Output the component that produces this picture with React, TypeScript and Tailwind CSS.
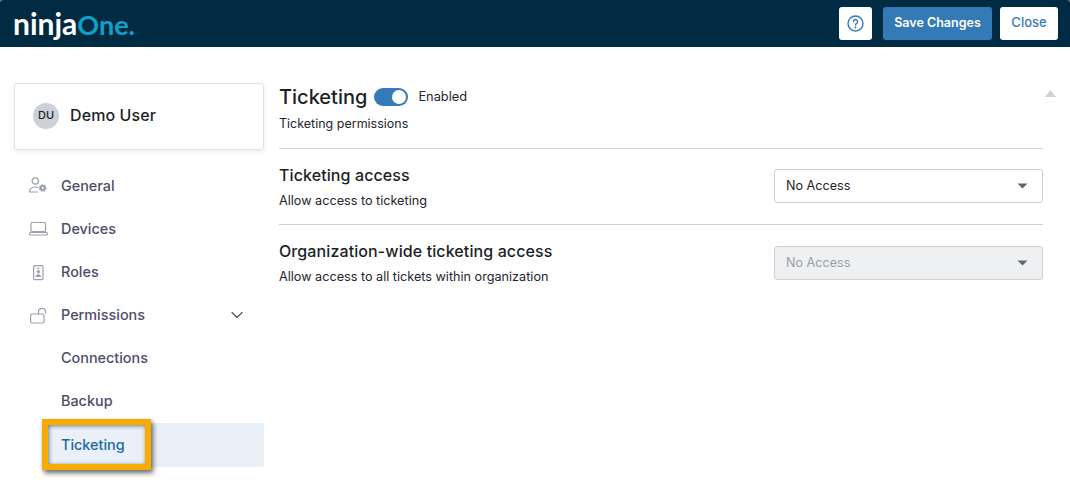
import { ChevronDown } from 'lucide-react';

function Caret() {
  return (
    <svg width="11" height="6" viewBox="0 0 11 6" className="text-[#5f6670]">
      <path d="M0.5 0.5h10L5.5 5.5z" fill="currentColor" />
    </svg>
  );
}

function Select({ disabled }: { disabled?: boolean }) {
  return (
    <div
      className={`w-[269px] h-[34px] shrink-0 flex items-center justify-between pl-[11px] pr-[14px] border border-[#ccd0d7] rounded-[3px] text-[12.6px] ${
        disabled ? 'bg-[#eff0f2] text-[#9a9fa8]' : 'bg-white text-[#1c1f26]'
      }`}
    >
      <span>No Access</span>
      <Caret />
    </div>
  );
}

function SettingRow({ title, text, disabled }: { title: string; text: string; disabled?: boolean }) {
  return (
    <div className="flex justify-between h-[76px] pt-[15px] border-t border-[#ccd0d7]">
      <div>
        <div className="text-[16px] leading-[22px] font-medium text-[#1c1f26] tracking-[0.1px]">{title}</div>
        <div className="text-[12.65px] leading-[18px] mt-[6px] text-[#23262d]">{text}</div>
      </div>
      <div className={disabled ? 'pt-[6px]' : 'pt-[5px]'}>
        <Select disabled={disabled} />
      </div>
    </div>
  );
}

function GeneralIcon() {
  return (
    <svg width="22" height="20" viewBox="0 0 22 20" fill="none" stroke="#9b9fb0" strokeWidth="1.2">
      <circle cx="7.3" cy="5" r="3.2" />
      <path d="M1.5 16h8M1.5 16c-.2-3 2.5-5 5.8-5 1 0 2 .2 2.8.5" strokeLinecap="round" />
      <circle cx="14.7" cy="12" r="3" fill="#9b9fb0" strokeWidth="1.6" strokeDasharray="1.5 1" />
      <circle cx="14.7" cy="12" r="1" fill="#fff" stroke="none" />
    </svg>
  );
}

function DevicesIcon() {
  return (
    <svg width="22" height="20" viewBox="0 0 22 20" fill="none" stroke="#9b9fb0" strokeWidth="1.2">
      <rect x="3" y="3.5" width="14.5" height="9" rx="1" />
      <rect x="1.5" y="13.5" width="18" height="2.5" rx="1" />
    </svg>
  );
}

function RolesIcon() {
  return (
    <svg width="22" height="20" viewBox="0 0 22 20" fill="none" stroke="#9b9fb0" strokeWidth="1.2">
      <rect x="5.6" y="3.6" width="9.4" height="14" rx="1.2" />
      <path d="M9.2 6.3h2.2" />
      <circle cx="10.3" cy="9.8" r="1.7" fill="#9b9fb0" stroke="none" />
      <path d="M7.6 15c0-1.8 1.2-2.8 2.7-2.8S13 13.200 13 15z" fill="#9b9fb0" stroke="none" />
    </svg>
  );
}

function LockIcon() {
  return (
    <svg width="24" height="20" viewBox="0 0 24 20" fill="none" stroke="#9b9fb0" strokeWidth="1.2">
      <rect x="2.600" y="9" width="13.400" height="9" rx="1.500" />
      <path d="M10.500 9V6.800a3.500 3.500 0 0 1 7 0V8" strokeLinecap="round" />
    </svg>
  );
}

const navItems = [
  { label: 'General', icon: <GeneralIcon /> },
  { label: 'Devices', icon: <DevicesIcon /> },
  { label: 'Roles', icon: <RolesIcon /> },
  { label: 'Permissions', icon: <LockIcon /> },
  { label: 'Connections' },
  { label: 'Backup' },
];

export default function App() {
  return (
    <div className="w-[1070px] h-[502px] bg-[#777777] overflow-hidden font-['Inter',sans-serif]">
      <header className="h-[47px] bg-[#012a43] rounded-t-[4px] flex items-center justify-between pl-[13px] pr-3">
        <div className="font-['Lato',sans-serif] font-bold leading-none pb-[1px]">
          <span className="text-white text-[30px]">ninja</span>
          <span className="text-[#12a0c9] text-[27px]">One.</span>
        </div>
        <div className="flex items-center">
          <button className="w-[33px] h-[33px] bg-white rounded-[3px] flex items-center justify-center">
            <svg width="17" height="17" viewBox="0 0 17 17" fill="none" stroke="#337ab7" strokeWidth="1.4">
              <circle cx="8.5" cy="8.5" r="7.5" />
              <path d="M6.400 6.600a2.100 2.100 0 1 1 3.200 1.800c-.7.4-1.100.8-1.100 1.600" strokeLinecap="round" />
              <path d="M8.500 12v.9" strokeLinecap="round" />
            </svg>
          </button>
          <button className="ml-[11px] w-[109px] h-[33px] bg-[#337ab7] text-white rounded-[3px] text-[12.5px] font-semibold">
            Save Changes
          </button>
          <button className="ml-2 w-[58px] h-[33px] pb-[2px] bg-white text-[#337ab7] rounded-[3px] text-[13px] font-medium">
            Close
          </button>
        </div>
      </header>

      <div className="flex h-[455px] bg-white pt-9 pl-[14px]">
        <aside className="w-[250px] shrink-0">
          <div className="h-[67px] border border-[#e0e2e6] rounded-[3px] shadow-[0_2px_5px_rgba(0,0,0,0.08)] flex items-center pl-[18px] gap-[11px] pb-[2px]">
            <div className="w-[26px] h-[26px] rounded-full bg-[#ccd0d7] flex items-center justify-center text-[11px] font-medium text-[#1c1f26]">
              DU
            </div>
            <span className="mb-[2px] text-[16px] font-medium text-[#1c1f26] tracking-[0.1px]">Demo User</span>
          </div>

          <nav className="mt-[14px] text-[14.4px] font-medium text-[#4d4d6b]">
            {navItems.map(item => (
              <div key={item.label} className="h-[43px] flex items-center">
                <span className="w-[47px] pl-[14px] flex">{item.icon}</span>
                {item.label}
                {item.label === 'Permissions' && <ChevronDown size={20} strokeWidth={1.4} className="ml-auto mr-[17px]" />}
              </div>
            ))}
            <div className="relative h-[44px] mt-[1px] ml-[29px] pl-[18px] flex items-center bg-[#e9f0f8] rounded-[3px] text-[#22699f]">
              Ticketing
              <div className="absolute left-[-1px] top-[-4px] w-[109px] h-[51px] border-[6px] border-[#f9ab05] shadow-[2px_3px_5px_rgba(0,0,0,0.6),inset_1px_1px_4px_rgba(0,0,0,0.5)]" />
            </div>
          </nav>
        </aside>

        <main className="relative w-[764px] ml-[15px]">
          <div className="h-[65px] pt-[1px]">
            <div className="flex items-center h-[26px]">
              <h1 className="text-[20px] font-medium text-[#1c1f26]">Ticketing</h1>
              <div className="ml-[7px] w-[34px] h-[18px] rounded-full bg-[#337ab7] flex items-center justify-end pr-[2px]">
                <div className="w-[14px] h-[14px] rounded-full bg-white" />
              </div>
              <span className="ml-[10px] text-[12.8px] text-[#23262d]">Enabled</span>
            </div>
            <p className="mt-[5px] text-[12.5px] leading-[18px] text-[#23262d]">Ticketing permissions</p>
          </div>
          <SettingRow title="Ticketing access" text="Allow access to ticketing" />
          <SettingRow title="Organization-wide ticketing access" text="Allow access to all tickets within organization" disabled />
          <svg width="11" height="7" viewBox="0 0 11 7" className="absolute right-[-13px] top-[7px]">
            <path d="M5.500 0L11 7H0z" fill="#ccd0d7" />
          </svg>
        </main>
      </div>
    </div>
  );
}
